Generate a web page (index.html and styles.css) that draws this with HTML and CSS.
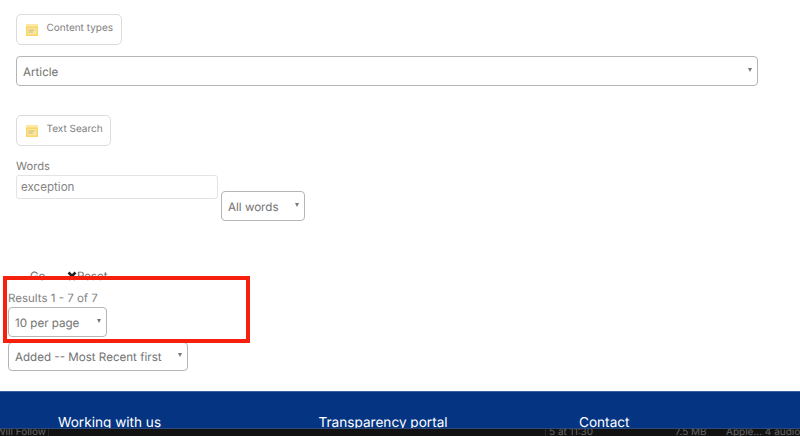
FILE: index.html
```html
<!DOCTYPE html>
<html lang="en">
<head>
<meta charset="utf-8">
<title>Search</title>
<link rel="stylesheet" href="styles.css">
</head>
<body>
<main class="page">
  <form class="filters">
    <div class="legend legend-first">
      <svg class="note" viewBox="0 0 12 12" aria-hidden="true"><rect width="12" height="12" fill="#fbd665"/><rect width="12" height="2.500" fill="#fde9a6"/><rect x="1.500" y="4" width="9" height="6.500" fill="#f8e6a4"/><path d="M2.500 6h6M2.500 8h4.500" stroke="#bda862" stroke-width=".7"/></svg>
      <span>Content types</span>
    </div>
    <div class="select select-wide"><span>Article</span><i class="caret"></i></div>
    <div class="legend legend-second">
      <svg class="note" viewBox="0 0 12 12" aria-hidden="true"><rect width="12" height="12" fill="#fbd665"/><rect width="12" height="2.500" fill="#fde9a6"/><rect x="1.500" y="4" width="9" height="6.500" fill="#f8e6a4"/><path d="M2.500 6h6M2.500 8h4.500" stroke="#bda862" stroke-width=".7"/></svg>
      <span>Text Search</span>
    </div>
    <label class="words-label" for="words">Words</label>
    <div class="words-row">
      <input id="words" class="words-input" type="text" value="exception">
      <div class="select select-words"><span>All words</span><i class="caret"></i></div>
    </div>
    <div class="actions">
      <span class="go">Go</span>
      <span class="reset"><svg class="x" viewBox="0 0 10 10" aria-hidden="true"><path d="M1.500 1.500l7 7M8.500 1.500l-7 7" stroke="#222" stroke-width="2.600"/></svg>Reset</span>
    </div>
  </form>
  <section class="results">
    <div class="count">Results 1 - 7 of 7</div>
    <div class="select select-per"><span>10 per page</span><i class="caret"></i></div>
    <div class="select select-sort"><span>Added -- Most Recent first</span><i class="caret"></i></div>
    <div class="highlight"></div>
  </section>
</main>
<footer class="footer">
  <div class="footer-col">Working with us</div>
  <div class="footer-col">Transparency portal</div>
  <div class="footer-col">Contact</div>
</footer>
<div class="taskbar">
  <div class="cell cell-name">Will Follow.</div>
  <div class="cell cell-gap"></div>
  <div class="cell cell-date">5 at 11:30</div>
  <div class="cell cell-size">7.5 MB</div>
  <div class="cell cell-kind">Apple... 4 audio</div>
</div>
</body>
</html>
```
FILE: styles.css
```css
* { box-sizing: border-box; }
html, body { margin: 0; height: 436px; overflow: hidden; background: #fff; }
body { font-family: Inter, "Liberation Sans", sans-serif; color: #6f6f6f; text-rendering: geometricPrecision; }

.page { height: 391px; padding-left: 8px; }
.filters { padding-left: 8px; padding-top: 14px; height: 276px; }

.legend {
  display: flex; align-items: flex-start; height: 31px;
  border: 1px solid #dcdcdc; border-radius: 5px;
  font-size: 10px; line-height: 14px; padding: 5.500px 0 0 8.500px; color: #808080;
}
.legend-first { width: 106px; }
.legend-second { width: 95px; margin-top: 29px; }
.note { width: 12px; height: 12px; margin: 3px 9px 0 0; flex: none; }

.select {
  display: flex; justify-content: space-between; align-items: flex-start;
  border: 1px solid #b5b5b5; border-radius: 4px; background: #fff;
  font-size: 11.600px; line-height: 16px; color: #727272;
  padding: 7px 5px 0 6px; height: 30px;
}
.caret {
  width: 0; height: 0; margin-top: 3.500px; flex: none;
  border-left: 2.500px solid transparent; border-right: 2.500px solid transparent;
  border-top: 4.500px solid #777;
}
.select-wide { width: 742px; margin-top: 11px; }
.select-words { width: 84px; margin: 16px 0 0 3px; }
.select-per { width: 99px; margin-top: 1px; }
.select-sort { width: 180px; height: 29px; margin-top: 5px; padding-top: 6px; }

.words-label { display: block; margin-top: 13px; font-size: 11.200px; line-height: 15px; color: #808080; }
.words-row { display: flex; align-items: flex-start; margin-top: 1px; height: 46px; }
.words-input {
  width: 202px; height: 24px; padding: 0 4px; margin: 0;
  border: 1px solid #e3e3e3; border-radius: 3px; outline: none;
  font: 11.600px Inter, "Liberation Sans", sans-serif; color: #858585;
}

.actions { display: flex; height: 16px; margin-top: 47px; padding-left: 14px; font-size: 11.500px; line-height: 16px; color: #6a6a6a; }
.go { width: 37px; }
.reset { display: flex; align-items: center; }
.x { width: 10px; height: 10px; flex: none; }

.results { position: relative; padding-top: 15px; }
.count { font-size: 11.500px; line-height: 15px; color: #808080; }
.highlight {
  position: absolute; left: -5px; top: 0; width: 247px; height: 67px;
  border: 4px solid #f5200d;
}

.footer {
  height: 37px; overflow: hidden; background: #053582; border-top: 1px solid #3a62a0;
  display: flex; padding: 23px 0 0 58px; color: #fff;
  font-size: 13.600px; line-height: 17px;
}
.footer-col { width: 260.500px; flex: none; }

.taskbar {
  height: 8px;
  display: flex; overflow: hidden; background: #121212;
  border-top: 1px solid #2d4a7a;
  font-size: 10px; line-height: 6px; color: #666;
}
.cell { white-space: nowrap; flex: none; }
.cell-name { width: 49px; border-right: 1px solid #2a2a2a; padding-right: 2px; overflow: hidden; direction: rtl; }
.cell-gap { width: 497px; border-right: 1px solid #2a2a2a; }
.cell-date { width: 129px; padding-left: 3px; }
.cell-size { width: 51px; }
.cell-kind { width: 74px; }
```
